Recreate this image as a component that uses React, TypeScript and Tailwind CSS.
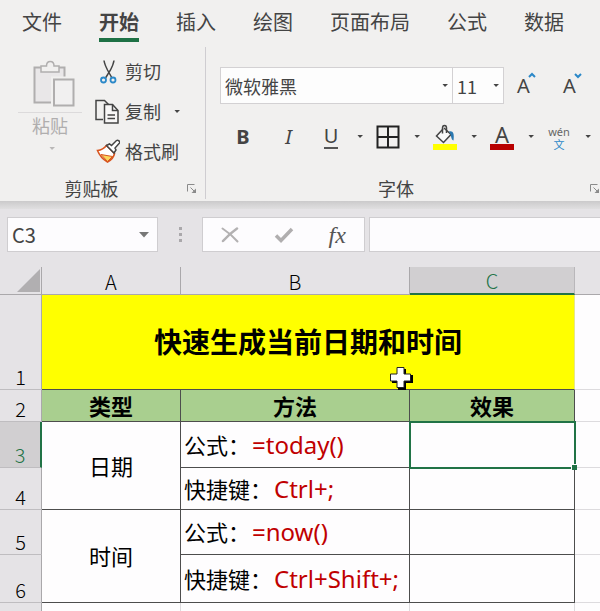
import type { ReactNode } from "react";

const TABS = ["文件", "开始", "插入", "绘图", "页面布局", "公式", "数据"];

export default function App() {
  return (
    <div className="flex h-screen flex-col overflow-hidden bg-[#e5e3e6] font-['Noto_Sans','Noto_Sans_CJK_SC',sans-serif] text-[#444]">
      <Tabs />
      <div className="flex h-[154px] shrink-0 bg-[#f1f0ef] pb-0.5">
        <ClipboardGroup />
        <FontGroup />
      </div>
      <div className="h-2 shrink-0 bg-linear-to-b from-[#cbcacb] to-[#e0dfe0]" />
      <FormulaBar />
      <Sheet />
    </div>
  );
}

function Tabs() {
  return (
    <nav className="flex h-[47px] shrink-0 gap-[37px] bg-[#f1f0ef] pl-[22px] pt-2 text-xl leading-[30px]">
      {TABS.map((tab) => (
        <a
          key={tab}
          href="#"
          className={
            tab === "开始"
              ? "h-[34px] shrink-0 border-b-4 border-[#1e7145] font-bold"
              : "h-[34px] shrink-0"
          }
        >
          {tab}
        </a>
      ))}
    </nav>
  );
}

function ClipboardGroup() {
  return (
    <section className="flex w-[206px] shrink-0 flex-col border-r border-[#cfcdd1] pr-2">
      <div className="flex flex-1 gap-3 pl-[18px]">
        <button className="flex w-16 flex-col items-center pt-[13px] text-lg text-[#b0aeae]">
          <PasteIcon />
          <span className="mt-1 w-full border-t border-[#dcdadb] leading-[26px]">粘贴</span>
          <Caret className="mt-2 ml-1 text-[#b9b7b7]" />
        </button>
        <div className="flex flex-col pt-[5px] text-lg">
          <button className="flex h-10 items-center gap-[5px]">
            <CutIcon />
            剪切
          </button>
          <button className="flex h-10 items-center gap-[5px]">
            <CopyIcon />
            复制
            <Caret className="ml-2" />
          </button>
          <button className="flex h-10 items-center gap-[5px]">
            <BrushIcon />
            格式刷
          </button>
        </div>
      </div>
      <GroupLabel>剪贴板</GroupLabel>
    </section>
  );
}

function FontGroup() {
  return (
    <section className="flex min-w-0 flex-1 flex-col">
      <div className="flex flex-1 flex-col pl-[14px] pt-5">
        <div className="flex">
          <div className="flex h-[37px] w-[284px] shrink-0 border border-[#d3d1d3] bg-[#fdfdfd]">
            <Picker label="字体" value="微软雅黑" className="flex-1 border-r border-[#d3d1d3]" />
            <Picker label="字号" value="11" className="w-[50px]" />
          </div>
          <button aria-label="增大字号" className="flex w-[46px] justify-center">
            <SizeIcon d="M12 8 L15 5 L18 8" />
          </button>
          <button aria-label="减小字号" className="flex w-[46px] justify-center">
            <SizeIcon d="M12 5 L15 8 L18 5" />
          </button>
        </div>
        <div className="mt-[17px] flex h-8 items-center text-xl leading-7">
          <button className="w-[46px] font-bold">B</button>
          <button className="w-[45px] italic">I</button>
          <Split label="下划线选项">
            <span className="border-b-2 border-[#555] leading-[22px]">U</span>
          </Split>
          <Split label="边框选项">
            <svg width="24" height="24" viewBox="0 0 24 24" fill="none" stroke="#222" strokeWidth="2">
              <path d="M1.5 1.5h21v21h-21zM12 1.5v21M1.5 12h21" />
            </svg>
          </Split>
          <Split label="填充颜色选项">
            <FillIcon />
          </Split>
          <Split label="字体颜色选项">
            <span className="w-6 border-b-[6px] border-[#b80000] text-center text-[22px] leading-5">A</span>
          </Split>
          <Split label="拼音选项">
            <span className="flex flex-col text-center text-[11px] leading-[15px] text-[#666]">
              wén
              <span className="text-[11px] leading-3 text-[#2b88c8]">文</span>
            </span>
          </Split>
        </div>
      </div>
      <GroupLabel>字体</GroupLabel>
    </section>
  );
}

function GroupLabel({ children }: { children: ReactNode }) {
  return (
    <div className="flex h-5 items-center text-lg leading-5">
      <span className="flex-1 pr-1 text-center">{children}</span>
      <button aria-label="更多设置">
        <svg width="10" height="10" viewBox="0 0 10 10" fill="none" stroke="#8a8a8a">
          <path d="M0.5 7.5v-7h7M3.5 3.5l4 4" />
          <path d="M9 4.5v4.5h-4.5z" fill="#8a8a8a" stroke="none" />
        </svg>
      </button>
    </div>
  );
}

function Picker({ label, value, className }: { label: string; value: string; className: string }) {
  return (
    <div className={`relative flex items-center ${className}`}>
      <select
        aria-label={label}
        className="h-full w-full appearance-none bg-transparent pl-1 font-['Noto_Sans_CJK_SC',sans-serif] text-lg outline-none"
      >
        <option>{value}</option>
      </select>
      <Caret className="pointer-events-none absolute right-1" />
    </div>
  );
}

function Split({ label, children }: { label: string; children: ReactNode }) {
  return (
    <div className="flex w-[57px] shrink-0 items-center">
      <button className="flex w-10 justify-center">{children}</button>
      <button aria-label={label} className="flex flex-1 justify-center">
        <Caret />
      </button>
    </div>
  );
}

function FormulaBar() {
  return (
    <div className="flex h-[58px] shrink-0 pb-[15px] pt-2 pl-[7px]">
      <div className="relative flex w-[151px] items-center border border-[#cfcdd0] bg-[#fdfcfe]">
        <input
          aria-label="名称框"
          defaultValue="C3"
          className="w-full bg-transparent pl-1 font-['Noto_Sans_CJK_SC',sans-serif] text-xl leading-7 outline-none"
        />
        <svg width="10" height="6" viewBox="0 0 10 6" className="absolute right-2">
          <path d="M0 0h10l-5 5.5z" fill="#777" />
        </svg>
      </div>
      <div className="flex w-11 flex-col items-center justify-center gap-[3px]">
        <span className="size-[3px] bg-[#aaa8ab]" />
        <span className="size-[3px] bg-[#aaa8ab]" />
        <span className="size-[3px] bg-[#aaa8ab]" />
      </div>
      <div className="flex w-[163px] items-center border border-[#cfcdd0] bg-[#fdfcfe]">
        <button aria-label="取消" className="flex flex-1 justify-center">
          <svg width="18" height="16" viewBox="0 0 18 16" fill="none" stroke="#b3b1b2" strokeLinecap="round">
            <path d="M1.5 1.5C7 5 12 9.500 16.500 14.500" strokeWidth="2" />
            <path d="M16 1.500C11 5 6 9.500 2 14" strokeWidth="2.500" />
          </svg>
        </button>
        <button aria-label="输入" className="flex flex-1 justify-center">
          <svg width="20" height="16" viewBox="0 0 20 16" fill="none" stroke="#b0aeaf" strokeWidth="3.500">
            <path d="M2 8.500l5 5L18 2" />
          </svg>
        </button>
        <button className="flex-1 font-['Liberation_Serif',serif] text-2xl italic leading-7 text-[#555]">
          fx
        </button>
      </div>
      <input
        aria-label="编辑栏"
        className="ml-1 min-w-0 flex-1 border border-r-0 border-[#cfcdd0] bg-[#fdfcfe] px-2 outline-none"
      />
    </div>
  );
}

const CELL = "border-b border-r border-[#4d4d4d]";
const HEAD = `${CELL} bg-[#a9cf8f] font-bold`;
const REST = "border-b border-[#dddbde]";

function Sheet() {
  return (
    <table className="w-full table-fixed border-separate border-spacing-0 bg-[#fefdfe] text-[22px] leading-7 text-black">
      <colgroup>
        <col className="w-[42px]" />
        <col className="w-[139px]" />
        <col className="w-[229px]" />
        <col className="w-[165px]" />
        <col />
      </colgroup>
      <thead className="bg-[#e5e3e6] font-['Noto_Sans_CJK_SC',sans-serif] text-xl leading-6">
        <tr className="h-7">
          <th aria-label="全选" className="border-b border-r border-[#aaa8ab] align-bottom">
            <svg width="23" height="23" viewBox="0 0 23 23" className="mb-0.5 ml-auto mr-px">
              <path d="M23 0v23H0z" fill="#b1afb1" />
            </svg>
          </th>
          <th className="border-b border-r border-[#aaa8ab] pt-0.5 font-light">A</th>
          <th className="border-b border-r border-[#aaa8ab] pt-0.5 font-light">B</th>
          <th className="border-b-2 border-r border-b-[#217346] border-r-[#b9b7ba] bg-[#d1cfd1] pt-0.5 font-light text-[#217346]">
            C
          </th>
          <th className="border-b border-[#aaa8ab]" />
        </tr>
      </thead>
      <tbody>
        <tr className="h-[95px]">
          <RowHead n={1} />
          <td colSpan={3} className="relative border-b border-r border-b-[#4d4d4d] border-r-[#e6e68a] bg-[#ffff00] text-center text-[28px] font-bold">
            快速生成当前日期和时间
            <PlusCursor />
          </td>
          <td className={REST} />
        </tr>
        <tr className="h-8">
          <RowHead n={2} />
          <th className={HEAD}>类型</th>
          <th className={HEAD}>方法</th>
          <th className={HEAD}>效果</th>
          <td className={REST} />
        </tr>
        <tr className="h-[46px]">
          <RowHead n={3} active />
          <td rowSpan={2} className={`${CELL} text-center`}>日期</td>
          <Method name="公式：" keys="=today()" />
          <td className={`${CELL} relative`}>
            <div className="absolute -bottom-0.5 -left-px -right-0.5 -top-px border-2 border-[#217346]" />
            <div className="absolute -bottom-[3px] -right-[3px] size-[6px] border-l border-t border-white bg-[#217346]" />
          </td>
          <td className={REST} />
        </tr>
        <tr className="h-[42px]">
          <RowHead n={4} />
          <Method name="快捷键：" keys="Ctrl+;" />
          <td className={CELL} />
          <td className={REST} />
        </tr>
        <tr className="h-[45px]">
          <RowHead n={5} />
          <td rowSpan={2} className={`${CELL} text-center`}>时间</td>
          <Method name="公式：" keys="=now()" />
          <td className={CELL} />
          <td className={REST} />
        </tr>
        <tr className="h-12">
          <RowHead n={6} />
          <Method name="快捷键：" keys="Ctrl+Shift+;" />
          <td className={CELL} />
          <td className={REST} />
        </tr>
        <tr className="h-[30px]">
          <RowHead n={7} />
          <td className="border-r border-[#dddbde]" />
          <td className="border-r border-[#dddbde]" />
          <td className="border-r border-[#dddbde]" />
          <td />
        </tr>
      </tbody>
    </table>
  );
}

function RowHead({ n, active = false }: { n: number; active?: boolean }) {
  return (
    <th
      className={`border-b border-b-[#bfbdc0] align-bottom font-['Noto_Sans_CJK_SC',sans-serif] text-xl font-light leading-6 ${
        active
          ? "border-r-2 border-r-[#217346] bg-[#d1cfd1] text-[#217346]"
          : "border-r border-r-[#aaa8ab] bg-[#e5e3e6]"
      }`}
    >
      {n}
    </th>
  );
}

function Method({ name, keys }: { name: string; keys: string }) {
  return (
    <td className={`${CELL} whitespace-nowrap pl-[3px]`}>
      {name}
      <span className="ml-0.5 text-2xl leading-7 text-[#c00000]">{keys}</span>
    </td>
  );
}

/** Excel's fat white cross pointer. */
function PlusCursor() {
  return (
    <svg width="24" height="24" viewBox="0 0 24 24" className="absolute left-[347px] top-[71px]">
      <path d="M9 3h8v6h7v8h-7v7H9v-7H3V9h6z" fill="#000" />
      <path d="M8 1.500h7v6.500h6.500v7H15v6.500H8V15H1.500V8H8z" fill="#fff" stroke="#222" />
    </svg>
  );
}

function Caret({ className = "" }: { className?: string }) {
  return (
    <svg width="6" height="4" viewBox="0 0 6 4" className={`shrink-0 ${className}`}>
      <path d="M0.500 0h5.500L3 3z" fill="currentColor" />
    </svg>
  );
}

function SizeIcon({ d }: { d: string }) {
  return (
    <span className="relative flex h-full w-5 items-center">
      <span className="text-xl leading-7">A</span>
      <svg width="24" height="12" viewBox="0 0 24 12" className="absolute left-0 top-0.5" fill="none" stroke="#2b88c8" strokeWidth="2">
        <path d={d} />
      </svg>
    </span>
  );
}

function PasteIcon() {
  return (
    <svg width="50" height="48" viewBox="-8 0 50 48" fill="#e9e7e8" stroke="#b0aeae" strokeWidth="1.500" className="shrink-0">
      <path d="M1.500 7.500h30v35h-30z" strokeWidth="2" />
      <path d="M8 12V6h5.500c0-6 7.500-6 7.500 0H26v6z" fill="#f1f0ef" />
      <path d="M18 16.500h24V48H18z" fill="#f1f0ef" stroke="none" />
      <path d="M21 19.500h19.500v26H21z" fill="#f1f0f0" strokeWidth="2" />
    </svg>
  );
}

function CutIcon() {
  return (
    <svg width="26" height="26" viewBox="0 0 26 26" fill="none" strokeWidth="1.500">
      <path d="M10 1.500c.5 3.500 2 6.500 3.500 9.500l4.500 8M20 1.500c-.5 3.500-2 6.500-3.500 9.500l-5 8" stroke="#444" />
      <circle cx="9.500" cy="21" r="2.500" stroke="#2b88c8" strokeWidth="1.800" />
      <circle cx="19" cy="21" r="2.500" stroke="#2b88c8" strokeWidth="1.800" />
    </svg>
  );
}

function CopyIcon() {
  return (
    <svg width="26" height="26" viewBox="0 0 26 26" fill="none" stroke="#444" strokeWidth="1.500">
      <path d="M9 20.500H2V1.500h8.500l4 4" />
      <path d="M10.500 5.500h8l5.500 6v12.500H10.500z" fill="#f8f7f7" />
      <path d="M18.500 5.500v6H24M13.500 16h7.500M13.500 19.500h7.500" />
    </svg>
  );
}

function BrushIcon() {
  return (
    <svg width="26" height="26" viewBox="0 0 26 26" fill="none">
      <path d="M3.500 11.500c3.500-.5 7-2.500 9-5l8 8c-.5 3-3.500 6.500-7 8.500C9 20.500 5.500 16.500 3.500 11.500z" fill="#fff" stroke="#d8541e" strokeWidth="1.600" />
      <path d="M7 15.500l11.500 2-5 5z" fill="#fbd75b" stroke="#d8541e" />
      <path d="M12.500 6.500l3-1.500 2 1.500L22.500 1.500c1.500-1 4 1 3 2.500L21 9l1 2-2 3z" fill="#fff" stroke="#444" strokeWidth="1.500" />
    </svg>
  );
}

function FillIcon() {
  return (
    <svg width="26" height="26" viewBox="0 0 26 26" fill="none">
      <path d="M11 5L4.500 12l7 6.500 7.500-8-7-6.500" fill="#fafafa" stroke="#444" strokeWidth="1.500" />
      <path d="M10.500 9.500V4c0-3.500 4-3.500 4 0v5" stroke="#444" strokeWidth="1.500" />
      <path d="M17 7.500c4-1 5.500 2 4.500 9-3-1-1.500-5-4.500-9z" fill="#2b78b0" />
      <path d="M1 20h24v6H1z" fill="#ffff00" />
    </svg>
  );
}
